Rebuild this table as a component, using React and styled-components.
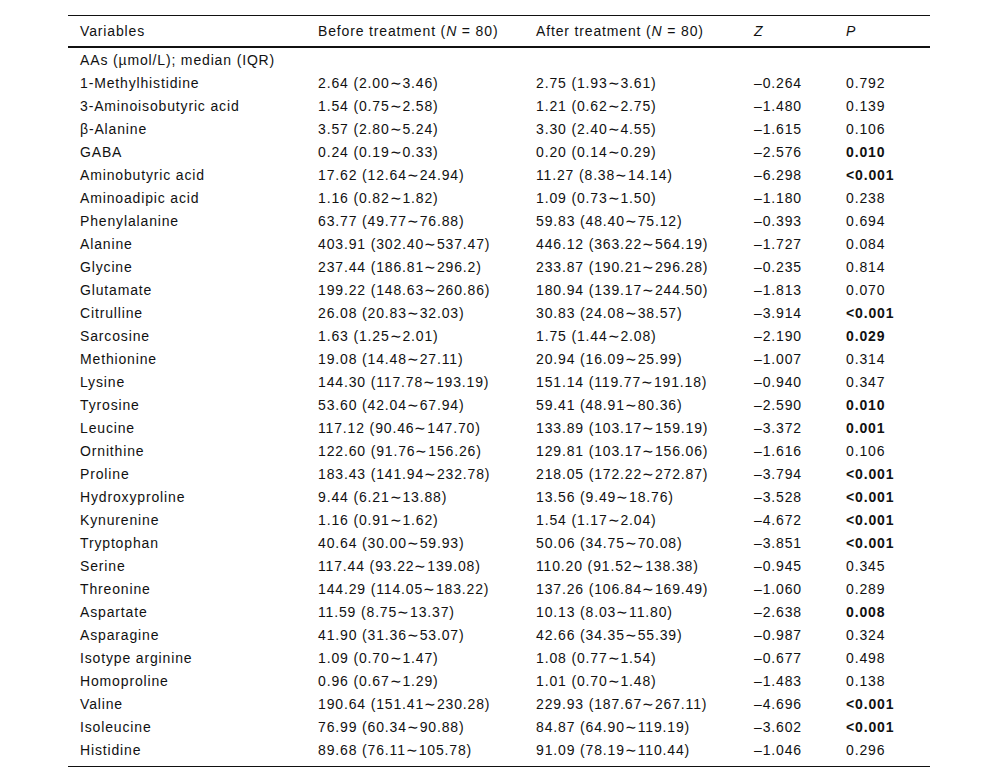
import React from 'react'
import styled, { createGlobalStyle } from 'styled-components'

const GlobalStyle = createGlobalStyle`
  body {
    margin: 0;
    background: #fff;
    font-family: "Liberation Sans", Arial, sans-serif;
    color: #111;
  }
`

const rows = [
  ['1-Methylhistidine', '2.64 (2.00∼3.46)', '2.75 (1.93∼3.61)', '–0.264', '0.792'],
  ['3-Aminoisobutyric acid', '1.54 (0.75∼2.58)', '1.21 (0.62∼2.75)', '–1.480', '0.139'],
  ['β-Alanine', '3.57 (2.80∼5.24)', '3.30 (2.40∼4.55)', '–1.615', '0.106'],
  ['GABA', '0.24 (0.19∼0.33)', '0.20 (0.14∼0.29)', '–2.576', '0.010', true],
  ['Aminobutyric acid', '17.62 (12.64∼24.94)', '11.27 (8.38∼14.14)', '–6.298', '<0.001', true],
  ['Aminoadipic acid', '1.16 (0.82∼1.82)', '1.09 (0.73∼1.50)', '–1.180', '0.238'],
  ['Phenylalanine', '63.77 (49.77∼76.88)', '59.83 (48.40∼75.12)', '–0.393', '0.694'],
  ['Alanine', '403.91 (302.40∼537.47)', '446.12 (363.22∼564.19)', '–1.727', '0.084'],
  ['Glycine', '237.44 (186.81∼296.2)', '233.87 (190.21∼296.28)', '–0.235', '0.814'],
  ['Glutamate', '199.22 (148.63∼260.86)', '180.94 (139.17∼244.50)', '–1.813', '0.070'],
  ['Citrulline', '26.08 (20.83∼32.03)', '30.83 (24.08∼38.57)', '–3.914', '<0.001', true],
  ['Sarcosine', '1.63 (1.25∼2.01)', '1.75 (1.44∼2.08)', '–2.190', '0.029', true],
  ['Methionine', '19.08 (14.48∼27.11)', '20.94 (16.09∼25.99)', '–1.007', '0.314'],
  ['Lysine', '144.30 (117.78∼193.19)', '151.14 (119.77∼191.18)', '–0.940', '0.347'],
  ['Tyrosine', '53.60 (42.04∼67.94)', '59.41 (48.91∼80.36)', '–2.590', '0.010', true],
  ['Leucine', '117.12 (90.46∼147.70)', '133.89 (103.17∼159.19)', '–3.372', '0.001', true],
  ['Ornithine', '122.60 (91.76∼156.26)', '129.81 (103.17∼156.06)', '–1.616', '0.106'],
  ['Proline', '183.43 (141.94∼232.78)', '218.05 (172.22∼272.87)', '–3.794', '<0.001', true],
  ['Hydroxyproline', '9.44 (6.21∼13.88)', '13.56 (9.49∼18.76)', '–3.528', '<0.001', true],
  ['Kynurenine', '1.16 (0.91∼1.62)', '1.54 (1.17∼2.04)', '–4.672', '<0.001', true],
  ['Tryptophan', '40.64 (30.00∼59.93)', '50.06 (34.75∼70.08)', '–3.851', '<0.001', true],
  ['Serine', '117.44 (93.22∼139.08)', '110.20 (91.52∼138.38)', '–0.945', '0.345'],
  ['Threonine', '144.29 (114.05∼183.22)', '137.26 (106.84∼169.49)', '–1.060', '0.289'],
  ['Aspartate', '11.59 (8.75∼13.37)', '10.13 (8.03∼11.80)', '–2.638', '0.008', true],
  ['Asparagine', '41.90 (31.36∼53.07)', '42.66 (34.35∼55.39)', '–0.987', '0.324'],
  ['Isotype arginine', '1.09 (0.70∼1.47)', '1.08 (0.77∼1.54)', '–0.677', '0.498'],
  ['Homoproline', '0.96 (0.67∼1.29)', '1.01 (0.70∼1.48)', '–1.483', '0.138'],
  ['Valine', '190.64 (151.41∼230.28)', '229.93 (187.67∼267.11)', '–4.696', '<0.001', true],
  ['Isoleucine', '76.99 (60.34∼90.88)', '84.87 (64.90∼119.19)', '–3.602', '<0.001', true],
  ['Histidine', '89.68 (76.11∼105.78)', '91.09 (78.19∼110.44)', '–1.046', '0.296'],
]

const App = () => {
  return (
    <>
      <GlobalStyle />
      <Wrap>
        <Table>
          <colgroup>
            <col style={{ width: 238 }} />
            <col style={{ width: 218 }} />
            <col style={{ width: 218 }} />
            <col style={{ width: 92 }} />
            <col style={{ width: 96 }} />
          </colgroup>
          <thead>
            <tr>
              <Th>Variables</Th>
              <Th>Before treatment (<i>N</i> = 80)</Th>
              <Th>After treatment (<i>N</i> = 80)</Th>
              <Th><i>Z</i></Th>
              <Th><i>P</i></Th>
            </tr>
          </thead>
          <tbody>
            <Row>
              <Td colSpan={5}>AAs (µmol/L); median (IQR)</Td>
            </Row>
            {rows.map((r, i) => (
              <Row key={r[0]} $last={i === rows.length - 1}>
                <Td>{r[0]}</Td>
                <Td>{r[1]}</Td>
                <Td>{r[2]}</Td>
                <Td>{r[3]}</Td>
                <Td $bold={r[5]}>{r[4]}</Td>
              </Row>
            ))}
          </tbody>
        </Table>
      </Wrap>
    </>
  )
}

export default App

const Wrap = styled.div`
  padding: 15px 0 0 68px;
`

const Table = styled.table`
  width: 862px;
  table-layout: fixed;
  border-collapse: collapse;
  border-top: 1px solid #111;
  border-bottom: 1px solid #111;
  font-size: 14px;
  letter-spacing: 0.85px;
`

const Th = styled.th`
  text-align: left;
  font-weight: 400;
  height: 30px;
  padding: 0 0 0 12px;
  border-bottom: 2px solid #111;
  white-space: nowrap;
`

const Row = styled.tr`
  td {
    height: 23px;
    padding-bottom: ${p => (p.$last ? '5px' : '0')};
  }
`

const Td = styled.td`
  padding: 0 0 0 12px;
  font-weight: ${p => (p.$bold ? 700 : 400)};
  white-space: nowrap;
`
